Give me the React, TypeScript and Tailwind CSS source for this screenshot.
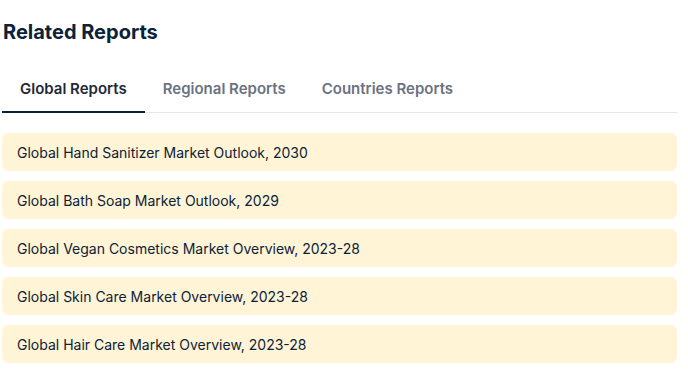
const tabs = ["Global Reports", "Regional Reports", "Countries Reports"];

const reports = [
  "Global Hand Sanitizer Market Outlook, 2030",
  "Global Bath Soap Market Outlook, 2029",
  "Global Vegan Cosmetics Market Overview, 2023-28",
  "Global Skin Care Market Overview, 2023-28",
  "Global Hair Care Market Overview, 2023-28",
];

export default function App() {
  return (
    <div
      className="w-[688px] h-[370px] bg-white pl-[2px] pr-[11px] pt-[20px]"
      style={{ fontFamily: "Inter, 'Noto Sans', sans-serif" }}
    >
      <h2 className="pl-[1px] text-[20px] leading-[24px] font-bold text-[#0b2239]">
        Related Reports
      </h2>

      {/* Tabs */}
      <div className="mt-[32px] flex border-b border-[#e5e7eb]">
        {tabs.map((tab, i) => (
          <button
            key={tab}
            className={`px-[18px] pb-[12px] pt-[3px] text-[15px] leading-[20px] font-semibold -mb-px ${
              i === 0
                ? "text-[#1f2937] border-b-2 border-[#0b2239]"
                : "text-[#6b7280] border-b-2 border-transparent"
            }`}
          >
            {tab}
          </button>
        ))}
      </div>

      {/* Report list */}
      <div className="mt-[20px] flex flex-col gap-[10px]">
        {reports.map((r) => (
          <div
            key={r}
            className="h-[38px] flex items-center px-[15px] rounded-md bg-[#fff4d6] text-[14px] text-[#0b2239]"
          >
            {r}
          </div>
        ))}
      </div>
    </div>
  );
}
